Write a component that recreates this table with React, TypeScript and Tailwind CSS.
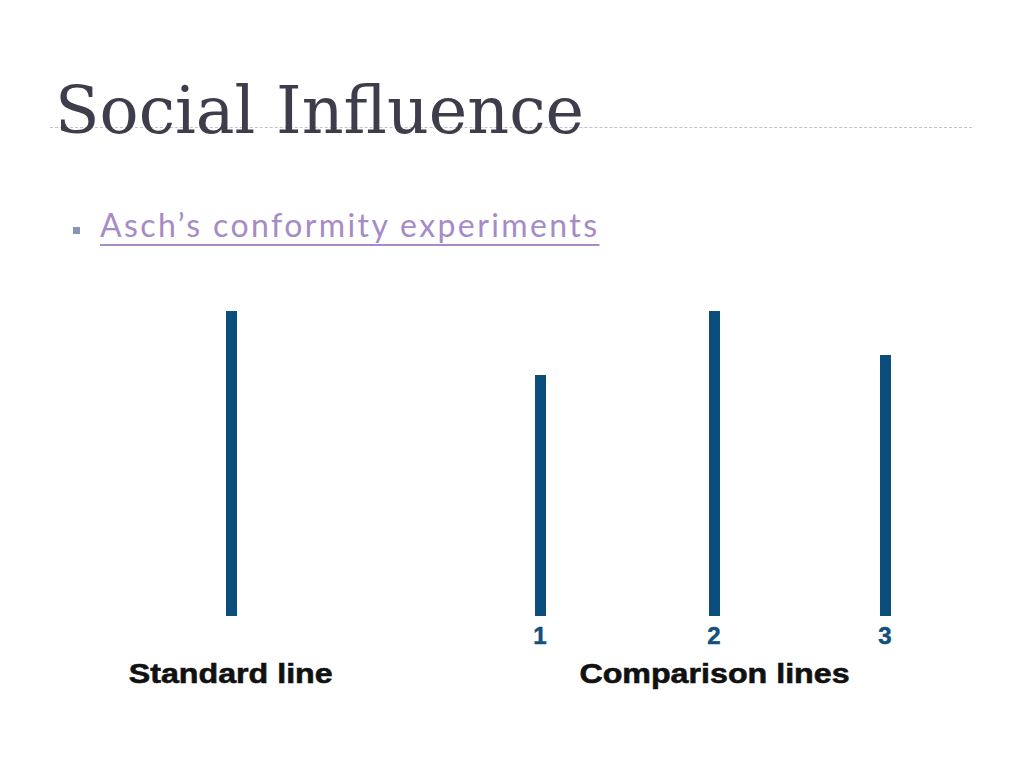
export default function App() {
  const bars = [
    { h: 305, digit: "", label: "Standard line", gap: 0 },
    { h: 241, digit: "1", label: "", gap: 269 },
    { h: 305, digit: "2", label: "Comparison lines", gap: 134 },
    { h: 261, digit: "3", label: "", gap: 131 },
  ];
  const gapClass: Record<number, string> = {
    0: "ml-[211px]",
    269: "ml-[269px]",
    134: "ml-[134px]",
    131: "ml-[131px]",
  };

  return (
    <div className="w-[1024px] h-[768px] bg-white overflow-hidden">
      <div className="pt-[78px] pl-[55px]">
        <h1
          className="text-[65px] leading-[65px] text-[#3e3d4c] whitespace-nowrap"
          style={{ fontFamily: '"DejaVu Serif", serif' }}
        >
          Social Influence
        </h1>
      </div>
      <div className="-mt-[16px] ml-[50px] w-[922px] border-t border-dashed border-[#c2c2cc]" />

      <div className="mt-[82px] pl-[73px] flex items-start gap-[20px]">
        <span className="mt-[17px] w-[7px] h-[7px] bg-[#8b93b6] shrink-0" />
        <a
          href="#"
          className="text-[32px] leading-[30px] tracking-[2.4px] text-[#a68bc6] underline decoration-[#a68bc6] decoration-[1.5px] underline-offset-[7px] whitespace-nowrap"
          style={{ fontFamily: 'Lato, "Noto Sans", sans-serif' }}
        >
          Asch’s conformity experiments
        </a>
      </div>

      <div
        className="mt-[71px] flex items-end"
        style={{ fontFamily: '"Liberation Sans", Arial, sans-serif' }}
      >
        {bars.map((b, i) => (
          <div key={i} className={`w-[40px] flex flex-col items-center ${gapClass[b.gap]}`}>
            <div className="w-[11px] bg-[#0b4e7c]" style={{ height: b.h }} />
            <div className="mt-[8px] h-[24px] text-[24px] leading-[24px] font-bold text-[#14507c] [-webkit-text-stroke:0.5px_#14507c]">
              {b.digit}
            </div>
            <div className="mt-[12px] h-[28px] whitespace-nowrap">
              {b.label && (
                <span className="inline-block text-[28px] leading-[28px] font-bold text-[#111111] scale-x-[1.15] [-webkit-text-stroke:0.6px_#111111]">
                  {b.label}
                </span>
              )}
            </div>
          </div>
        ))}
      </div>
    </div>
  );
}
